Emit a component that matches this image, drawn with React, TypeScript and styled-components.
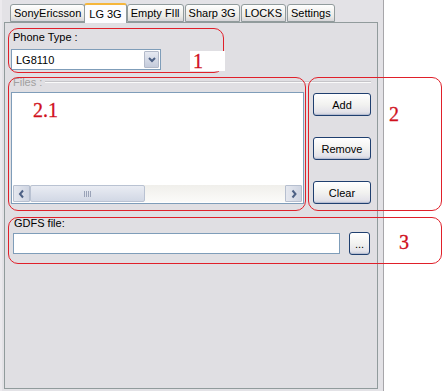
import React from "react";
import styled, { createGlobalStyle } from "styled-components";

const Global = createGlobalStyle`
  html, body { margin: 0; padding: 0; background: #ffffff; }
  body { font-family: Tahoma, "Liberation Sans", Arial, sans-serif; font-size: 11px; color: #000; }
`;

const Stage = styled.div`
  position: relative;
  width: 444px;
  height: 391px;
  overflow: hidden;
  background: #ffffff;
`;

const Frame = styled.div`
  width: 384px;
  height: 391px;
  box-sizing: border-box;
  background: #e3e2e6;
  border-left: 2px solid #eceaee;
  border-right: 1px solid #a7a6aa;
  display: flex;
  flex-direction: column;
  padding: 2px 5px 2px 2px;
`;

const TabStrip = styled.div`
  display: flex;
  align-items: flex-end;
  height: 20px;
  padding-left: 6px;
`;

const Tab = styled.div<{ $active?: boolean }>`
  height: ${(p) => (p.$active ? "20px" : "18px")};
  box-sizing: border-box;
  padding: 0 ${(p) => (p.$active ? "4px" : "3px")};
  margin-right: ${(p) => (p.$active ? "0" : "1px")};
  margin-left: ${(p) => (p.$active ? "-2px" : "0")};
  border: 1px solid #919b9c;
  border-bottom: ${(p) => (p.$active ? "none" : "1px solid #919b9c")};
  border-top: ${(p) => (p.$active ? "2px solid #f5b63c" : "1px solid #919b9c")};
  border-radius: 3px 3px 0 0;
  background: ${(p) =>
    p.$active ? "#fcfcfe" : "linear-gradient(#fefefe, #ecebe6 70%, #d6d5d9)"};
  display: flex;
  align-items: center;
  white-space: nowrap;
  position: relative;
  z-index: ${(p) => (p.$active ? 2 : 1)};
  margin-bottom: ${(p) => (p.$active ? "-1px" : "0")};
`;

const Panel = styled.div`
  flex: 1;
  box-sizing: border-box;
  border: 1px solid #919b9c;
  background: #e0dfe3;
  padding: 8px 6px 0 6px;
  display: flex;
  flex-direction: column;
`;

const Label = styled.div<{ $muted?: boolean }>`
  color: ${(p) => (p.$muted ? "#a0a0a0" : "#000")};
  line-height: 13px;
  padding-left: 2px;
`;

const Combo = styled.div`
  margin-top: 5px;
  width: 150px;
  height: 21px;
  box-sizing: border-box;
  border: 1px solid #7f9db9;
  background: #fff;
  display: flex;
  align-items: center;
  padding: 1px;
`;

const ComboText = styled.div`
  flex: 1;
  padding-left: 3px;
`;

const ArrowBtn = styled.div`
  width: 15px;
  height: 17px;
  box-sizing: border-box;
  border: 1px solid #b3bac9;
  border-radius: 1px;
  background: linear-gradient(#e6e9f1, #c4cbdb);
  display: flex;
  align-items: center;
  justify-content: center;
`;

const GroupHead = styled.div`
  margin-top: 6px;
  display: flex;
  align-items: center;
  gap: 3px;
  height: 12px;
`;

const GroupLine = styled.div`
  flex: 1;
  height: 0;
  border-top: 1px solid #c6c5c9;
  border-bottom: 1px solid #fafafa;
`;

const FilesRow = styled.div`
  margin-top: 4px;
  display: flex;
  gap: 9px;
`;

const ListBox = styled.div`
  width: 293px;
  height: 112px;
  box-sizing: border-box;
  border: 1px solid #7f9db9;
  background: #fff;
  display: flex;
  flex-direction: column;
  justify-content: flex-end;
  padding: 1px;
`;

const HScroll = styled.div`
  height: 17px;
  display: flex;
  background: #f3f2ee;
`;

const ScrollBtn = styled.div`
  width: 17px;
  height: 17px;
  box-sizing: border-box;
  border: 1px solid #b6bfcf;
  border-radius: 1px;
  background: linear-gradient(90deg, #e5e8ef, #cfd5e2);
  display: flex;
  align-items: center;
  justify-content: center;
`;

const Track = styled.div`
  flex: 1;
  display: flex;
  background: linear-gradient(#f0efeb, #fbfbf9);
`;

const Thumb = styled.div`
  width: 115px;
  box-sizing: border-box;
  border: 1px solid #b9c2d2;
  border-radius: 2px;
  background: linear-gradient(#e9ecf3, #d2d8e5);
  display: flex;
  align-items: center;
  justify-content: center;
`;

const Grip = styled.div`
  width: 7px;
  height: 6px;
  background: repeating-linear-gradient(90deg, #9aa3b8 0 1px, transparent 1px 2px);
`;

const ButtonCol = styled.div`
  display: flex;
  flex-direction: column;
  gap: 21px;
  padding-top: 1px;
`;

const Button = styled.div<{ $w?: number }>`
  width: ${(p) => p.$w ?? 58}px;
  height: 23px;
  box-sizing: border-box;
  border: 1px solid #1f3f6f;
  border-radius: 3px;
  background: linear-gradient(#ffffff, #f2f2f0 50%, #e4e3ea 85%, #cdd0da);
  box-shadow: inset 0 -1px 0 #b6bdd2;
  display: flex;
  align-items: center;
  justify-content: center;
`;

const FileLabel = styled(Label)`
  margin-top: 13px;
  padding-left: 3px;
`;

const FileRow = styled.div`
  margin-top: 2px;
  display: flex;
  align-items: center;
  gap: 9px;
  padding-left: 2px;
`;

const TextBox = styled.div`
  width: 327px;
  height: 21px;
  box-sizing: border-box;
  border: 1px solid #7f9db9;
  background: #fff;
`;

const Note = styled.div<{ $x: number; $y: number; $w: number; $h: number; $r?: number }>`
  position: absolute;
  left: ${(p) => p.$x}px;
  top: ${(p) => p.$y}px;
  width: ${(p) => p.$w}px;
  height: ${(p) => p.$h}px;
  box-sizing: border-box;
  border: 1px solid #e0202a;
  border-radius: ${(p) => p.$r ?? 10}px;
  pointer-events: none;
`;

const Num = styled.div<{ $x: number; $y: number; $bg?: boolean }>`
  position: absolute;
  left: ${(p) => p.$x}px;
  top: ${(p) => p.$y}px;
  font-family: "Liberation Serif", "Times New Roman", serif;
  font-size: 20px;
  line-height: 20px;
  color: #d0101c;
  -webkit-text-stroke: 0.3px #d0101c;
  background: ${(p) => (p.$bg ? "#ffffff" : "transparent")};
  padding-right: ${(p) => (p.$bg ? "22px" : "0")};
  padding-left: ${(p) => (p.$bg ? "3px" : "0")};
`;

const Chevron = ({ dir }: { dir: "down" | "left" | "right" }) => {
  const d =
    dir === "down" ? "M2 3 L5 6 L8 3" : dir === "left" ? "M6 1.5 L3 5 L6 8.5" : "M3.5 1.5 L6.5 5 L3.5 8.5";
  return (
    <svg width="10" height="10" viewBox="0 0 10 10">
      <path d={d} fill="none" stroke="#4d6185" strokeWidth="2" />
    </svg>
  );
};

export default function App() {
  return (
    <Stage>
      <Global />
      <Frame>
        <TabStrip>
          <Tab>SonyEricsson</Tab>
          <Tab $active>LG 3G</Tab>
          <Tab>Empty FIll</Tab>
          <Tab>Sharp 3G</Tab>
          <Tab>LOCKS</Tab>
          <Tab>Settings</Tab>
        </TabStrip>
        <Panel>
          <Label>Phone Type :</Label>
          <Combo>
            <ComboText>LG8110</ComboText>
            <ArrowBtn>
              <Chevron dir="down" />
            </ArrowBtn>
          </Combo>
          <GroupHead>
            <Label $muted>Files :</Label>
            <GroupLine />
          </GroupHead>
          <FilesRow>
            <ListBox>
              <HScroll>
                <ScrollBtn>
                  <Chevron dir="left" />
                </ScrollBtn>
                <Track>
                  <Thumb>
                    <Grip />
                  </Thumb>
                </Track>
                <ScrollBtn>
                  <Chevron dir="right" />
                </ScrollBtn>
              </HScroll>
            </ListBox>
            <ButtonCol>
              <Button>Add</Button>
              <Button>Remove</Button>
              <Button>Clear</Button>
            </ButtonCol>
          </FilesRow>
          <FileLabel>GDFS file:</FileLabel>
          <FileRow>
            <TextBox />
            <Button $w={21}>...</Button>
          </FileRow>
        </Panel>
      </Frame>
      <Note $x={8} $y={28} $w={216} $h={45} />
      <Num $x={190} $y={51} $bg>1</Num>
      <Note $x={8} $y={77} $w={298} $h={134} />
      <Num $x={33} $y={100}>2.1</Num>
      <Note $x={308} $y={77} $w={134} $h={134} />
      <Num $x={389} $y={104}>2</Num>
      <Note $x={8} $y={217} $w={434} $h={47} />
      <Num $x={399} $y={232}>3</Num>
    </Stage>
  );
}
